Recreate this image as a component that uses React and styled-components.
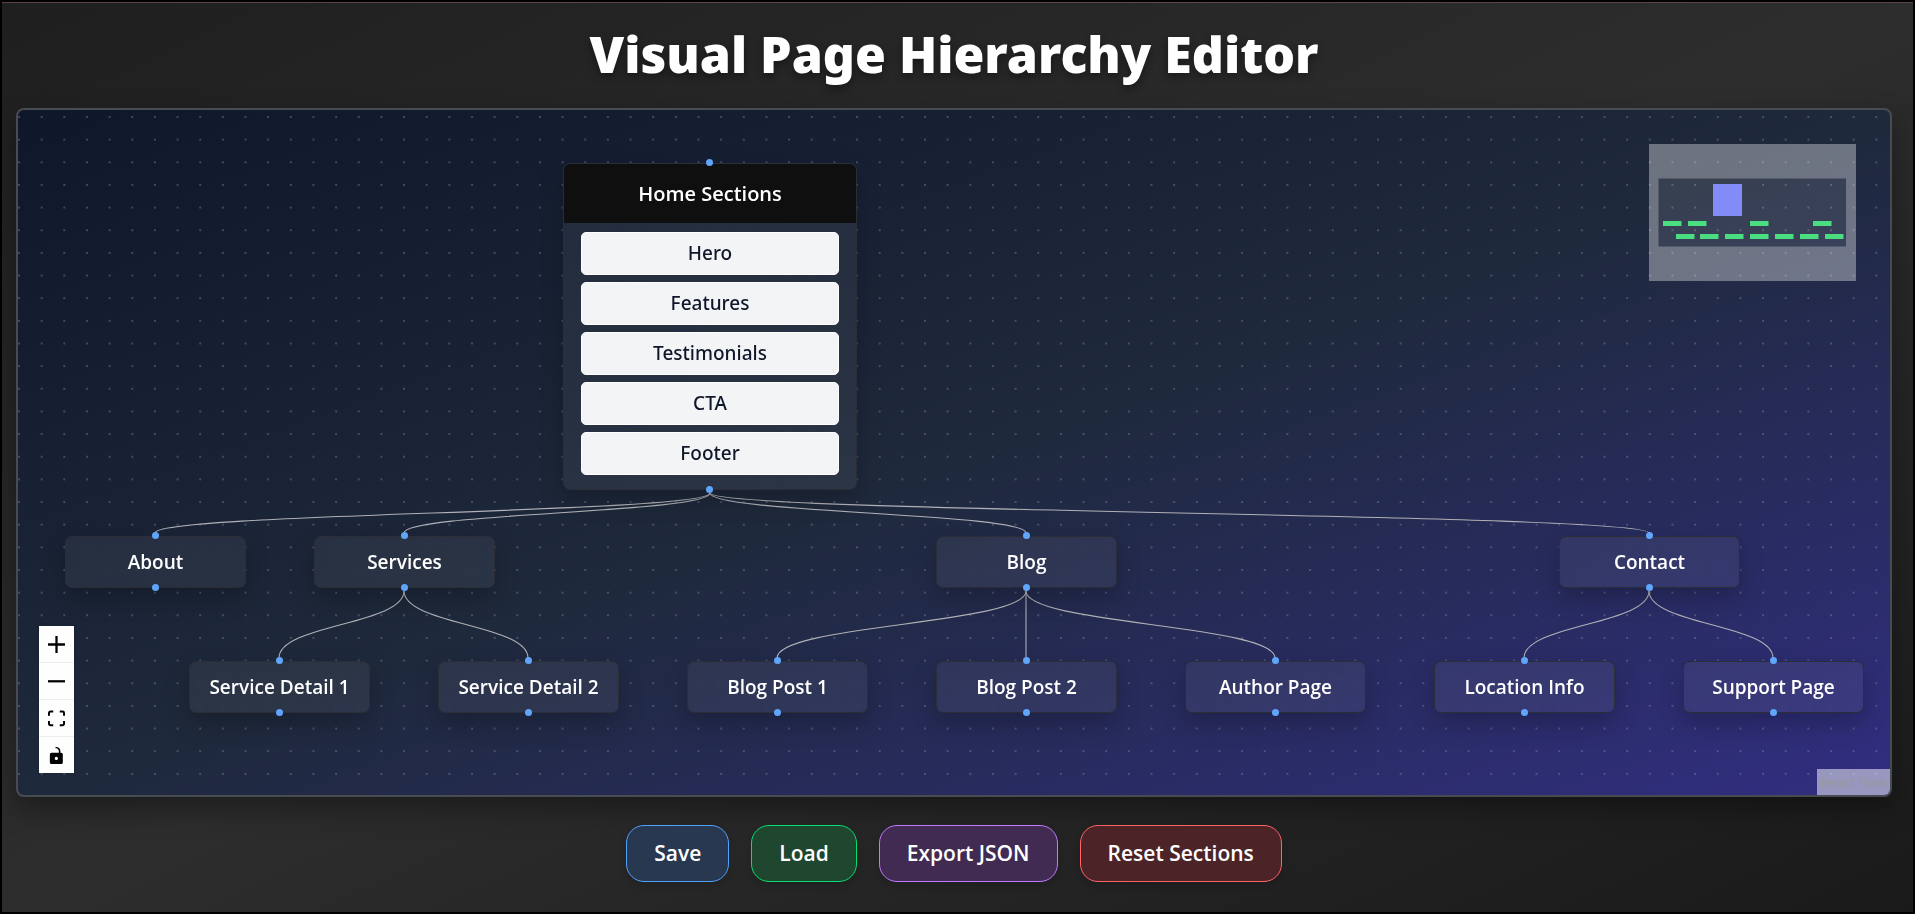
import React from "react";
import styled, { createGlobalStyle, css } from "styled-components";

const GlobalStyle = createGlobalStyle`
  *, *::before, *::after { box-sizing: border-box; }
  html, body, #root { height: 100%; }
  body {
    margin: 0;
    background: #000;
    font-family: "Open Sans", "Noto Sans", sans-serif;
  }
`;

const Frame = styled.div`
  min-height: 100%;
  display: flex;
  padding: 2px;
`;

const Page = styled.main`
  flex: 1;
  min-width: 0;
  display: flex;
  flex-direction: column;
  align-items: stretch;
  padding: 0 21px 30px 14px;
  border-top: 1px solid #5a4448;
  background: linear-gradient(to bottom right, #1f1f1f, #2d2d2d 50%, #1a1a1a);
`;

const Title = styled.h1`
  margin: 0;
  padding: 17px 0 20px;
  text-align: center;
  font-family: "Noto Sans", "Open Sans", sans-serif;
  font-size: 50px;
  line-height: 68px;
  font-weight: 900;
  color: #fff;
  text-shadow: 0 4px 8px rgba(0, 0, 0, 0.4);
`;

const CanvasShadow = styled.div`
  flex: 1;
  display: flex;
  flex-direction: column;
  border-radius: 8px;
  box-shadow: 0 12px 28px rgba(0, 0, 0, 0.35);
`;

const Canvas = styled.section`
  position: relative;
  flex: 1;
  min-height: 640px;
  overflow: hidden;
  border: 2px solid #484b50;
  border-radius: 8px;
  background: linear-gradient(to bottom right, #0f172a, #1e293b 50%, #312e81);
`;

const Drawing = styled.svg`
  position: absolute;
  top: 0;
  left: 0;
  width: 100%;
  height: 100%;
`;

const nodeSurface = css`
  position: absolute;
  border: 1px solid #2b2e36;
  border-radius: 7px;
  background: rgba(255, 255, 255, 0.06);
  backdrop-filter: blur(6px);
  box-shadow: 0 10px 24px rgba(0, 0, 0, 0.22);
  color: #fff;
  text-align: center;
`;

const PageNode = styled.div`
  ${nodeSurface}
  left: ${(p) => p.$x - 90}px;
  top: ${(p) => p.$y}px;
  width: 181px;
  height: 52px;
  font-size: 19px;
  line-height: 50px;
  font-weight: 600;
  white-space: nowrap;
`;

const HomeNode = styled.div`
  ${nodeSurface}
  left: ${(p) => p.$x - 147}px;
  top: ${(p) => p.$y}px;
  width: 294px;
`;

const HomeHeader = styled.h2`
  margin: 0;
  border-radius: 6px 6px 0 0;
  background: #0f0f0f;
  font-size: 20px;
  line-height: 59px;
  font-weight: 600;
`;

const SectionList = styled.ul`
  display: flex;
  flex-direction: column;
  gap: 7px;
  margin: 0;
  padding: 9px 17px 14px;
  list-style: none;
`;

const SectionItem = styled.li`
  border: 1px solid #fff;
  border-radius: 5px;
  background: #f3f4f6;
  color: #0f172a;
  font-family: "Noto Sans", "Open Sans", sans-serif;
  font-size: 19px;
  line-height: 41px;
  font-weight: 500;
`;

const Handle = styled.span`
  position: absolute;
  left: 50%;
  ${(p) => (p.$side === "top" ? "top: -5px;" : "bottom: -4px;")}
  width: 7px;
  height: 7px;
  margin-left: -4px;
  border-radius: 50%;
  background: #60a5fa;
`;

const MiniMap = styled.svg`
  position: absolute;
  top: 34px;
  right: 34px;
  width: 207px;
  height: 137px;
  background: rgba(255, 255, 255, 0.11);
`;

const Controls = styled.div`
  position: absolute;
  left: 21px;
  bottom: 22px;
  display: flex;
  flex-direction: column;
  width: 35px;
  box-shadow: 0 0 2px 1px rgba(0, 0, 0, 0.08);
`;

const ControlButton = styled.button`
  display: flex;
  align-items: center;
  justify-content: center;
  height: 37px;
  padding: 0;
  border: 0;
  border-bottom: 1px solid #eee;
  background: #fefefe;
  color: #000;
  cursor: pointer;

  &:last-child {
    height: 36px;
    border-bottom: 0;
  }

  svg {
    width: 17px;
    height: 17px;
    fill: currentColor;
  }
`;

const Attribution = styled.a`
  position: absolute;
  right: 0;
  bottom: 0;
  padding: 3px 4px;
  background: rgba(255, 255, 255, 0.5);
  color: #999;
  font-size: 13px;
  line-height: 20px;
  text-decoration: none;
`;

const Actions = styled.div`
  display: flex;
  justify-content: center;
  gap: 22px;
  padding-top: 28px;
`;

const tones = {
  blue: ["#283850", "#51a2ff"],
  green: ["#1f462e", "#05df72"],
  purple: ["#412b52", "#c27aff"],
  red: ["#4c2427", "#ff6467"],
};

const ActionButton = styled.button`
  padding: 0 27px;
  border: 1px solid ${(p) => tones[p.$tone][1]};
  border-radius: 18px;
  background: ${(p) => tones[p.$tone][0]};
  box-shadow: 0 4px 8px rgba(0, 0, 0, 0.15);
  color: #fff;
  font-family: inherit;
  font-size: 21px;
  line-height: 55px;
  font-weight: 600;
  cursor: pointer;
`;

const ROW_1 = 426;
const ROW_2 = 551;
const HOME = { x: 692, y: 53, bottom: 379 };

const pages = [
  { label: "About", x: 137, y: ROW_1 },
  { label: "Services", x: 386, y: ROW_1 },
  { label: "Blog", x: 1008, y: ROW_1 },
  { label: "Contact", x: 1631, y: ROW_1 },
  { label: "Service Detail 1", x: 261, y: ROW_2, parent: 386 },
  { label: "Service Detail 2", x: 510, y: ROW_2, parent: 386 },
  { label: "Blog Post 1", x: 759, y: ROW_2, parent: 1008 },
  { label: "Blog Post 2", x: 1008, y: ROW_2, parent: 1008 },
  { label: "Author Page", x: 1257, y: ROW_2, parent: 1008 },
  { label: "Location Info", x: 1506, y: ROW_2, parent: 1631 },
  { label: "Support Page", x: 1755, y: ROW_2, parent: 1631 },
];

const sections = ["Hero", "Features", "Testimonials", "CTA", "Footer"];

const edgePath = ({ x, y, parent }) => {
  const sx = parent ?? HOME.x;
  const sy = parent ? ROW_1 + 55 : HOME.bottom + 4;
  const ty = y - 3;
  const mid = (sy + ty) / 2;
  return `M${sx},${sy} C${sx},${mid} ${x},${mid} ${x},${ty}`;
};

const miniNodes = [
  [14, 77], [39, 77], [101, 77], [164, 77],
  [27, 90], [51, 90], [76, 90], [101, 90], [126, 90], [151, 90], [176, 90],
];

export default function App() {
  return (
    <>
      <GlobalStyle />
      <Frame>
        <Page>
          <Title>Visual Page Hierarchy Editor</Title>
          <CanvasShadow>
            <Canvas aria-label="Page hierarchy">
              <Drawing aria-hidden="true">
                <defs>
                  <pattern id="dots" x="0" y="6" width="22.65" height="22.65" patternUnits="userSpaceOnUse">
                    <circle cx="1" cy="1" r="0.7" fill="#8b93a1" />
                  </pattern>
                </defs>
                <rect width="100%" height="100%" fill="url(#dots)" />
                <g fill="none" stroke="#b1b1b7" strokeWidth="1.1">
                  {pages.map((page) => (
                    <path key={page.label} d={edgePath(page)} />
                  ))}
                </g>
              </Drawing>

              <HomeNode $x={HOME.x} $y={HOME.y}>
                <Handle $side="top" />
                <HomeHeader>Home Sections</HomeHeader>
                <SectionList>
                  {sections.map((name) => (
                    <SectionItem key={name}>{name}</SectionItem>
                  ))}
                </SectionList>
                <Handle $side="bottom" />
              </HomeNode>

              {pages.map(({ label, x, y }) => (
                <PageNode key={label} $x={x} $y={y}>
                  <Handle $side="top" />
                  {label}
                  <Handle $side="bottom" />
                </PageNode>
              ))}

              <MiniMap viewBox="0 0 207 137" role="img" aria-label="Mini map">
                <rect x="64" y="40" width="29" height="32" fill="#818cf8" />
                {miniNodes.map(([x, y]) => (
                  <rect key={`${x}-${y}`} x={x} y={y} width="18.5" height="5" fill="#4ade80" />
                ))}
                <path
                  d="M0,0h207v137h-207z M9.500,34.500v68h187.500v-68z"
                  fill="rgba(240,240,240,0.3)"
                  fillRule="evenodd"
                />
              </MiniMap>

              <Controls>
                <ControlButton type="button" aria-label="Zoom in">
                  <svg viewBox="0 0 32 32">
                    <path d="M32 18.133H18.133V32h-4.266V18.133H0v-4.266h13.867V0h4.266v13.867H32z" />
                  </svg>
                </ControlButton>
                <ControlButton type="button" aria-label="Zoom out">
                  <svg viewBox="0 0 32 5">
                    <path d="M0 0h32v4.200H0z" />
                  </svg>
                </ControlButton>
                <ControlButton type="button" aria-label="Fit view">
                  <svg viewBox="0 0 32 30">
                    <path d="M3.692 4.630c0-.530.400-.938.939-.938h5.215V0H4.708C2.130 0 0 2.054 0 4.630v5.216h3.692V4.630zM27.354 0h-5.200v3.692h5.170c.530 0 .984.400.984.939v5.215H32V4.631A4.624 4.624 0 0027.354 0zm.954 24.830c0 .532-.400.940-.939.940h-5.215v3.768h5.215c2.577 0 4.631-2.130 4.631-4.707v-5.139h-3.692v5.139zm-23.677.940c-.531 0-.939-.400-.939-.940v-5.138H0v5.139c0 2.577 2.130 4.707 4.708 4.707h5.138V25.770H4.631z" />
                  </svg>
                </ControlButton>
                <ControlButton type="button" aria-label="Toggle interactivity">
                  <svg viewBox="0 0 25 32">
                    <path d="M21.333 10.667H19.810V7.619C19.810 3.429 16.380 0 12.190 0c-4.114 1.828-1.370 2.133.305 2.438 1.676.305 4.420 2.590 4.420 5.181v3.048H3.047A3.056 3.056 0 000 13.714v15.238A3.056 3.056 0 003.048 32h18.285a3.056 3.056 0 003.048-3.048V13.714a3.056 3.056 0 00-3.048-3.047zM12.190 24.533a3.056 3.056 0 01-3.047-3.047 3.056 3.056 0 013.047-3.048 3.056 3.056 0 013.048 3.048 3.056 3.056 0 01-3.048 3.047z" />
                  </svg>
                </ControlButton>
              </Controls>

              <Attribution href="#react-flow">React Flow</Attribution>
            </Canvas>
          </CanvasShadow>
          <Actions>
            <ActionButton type="button" $tone="blue">Save</ActionButton>
            <ActionButton type="button" $tone="green">Load</ActionButton>
            <ActionButton type="button" $tone="purple">Export JSON</ActionButton>
            <ActionButton type="button" $tone="red">Reset Sections</ActionButton>
          </Actions>
        </Page>
      </Frame>
    </>
  );
}
